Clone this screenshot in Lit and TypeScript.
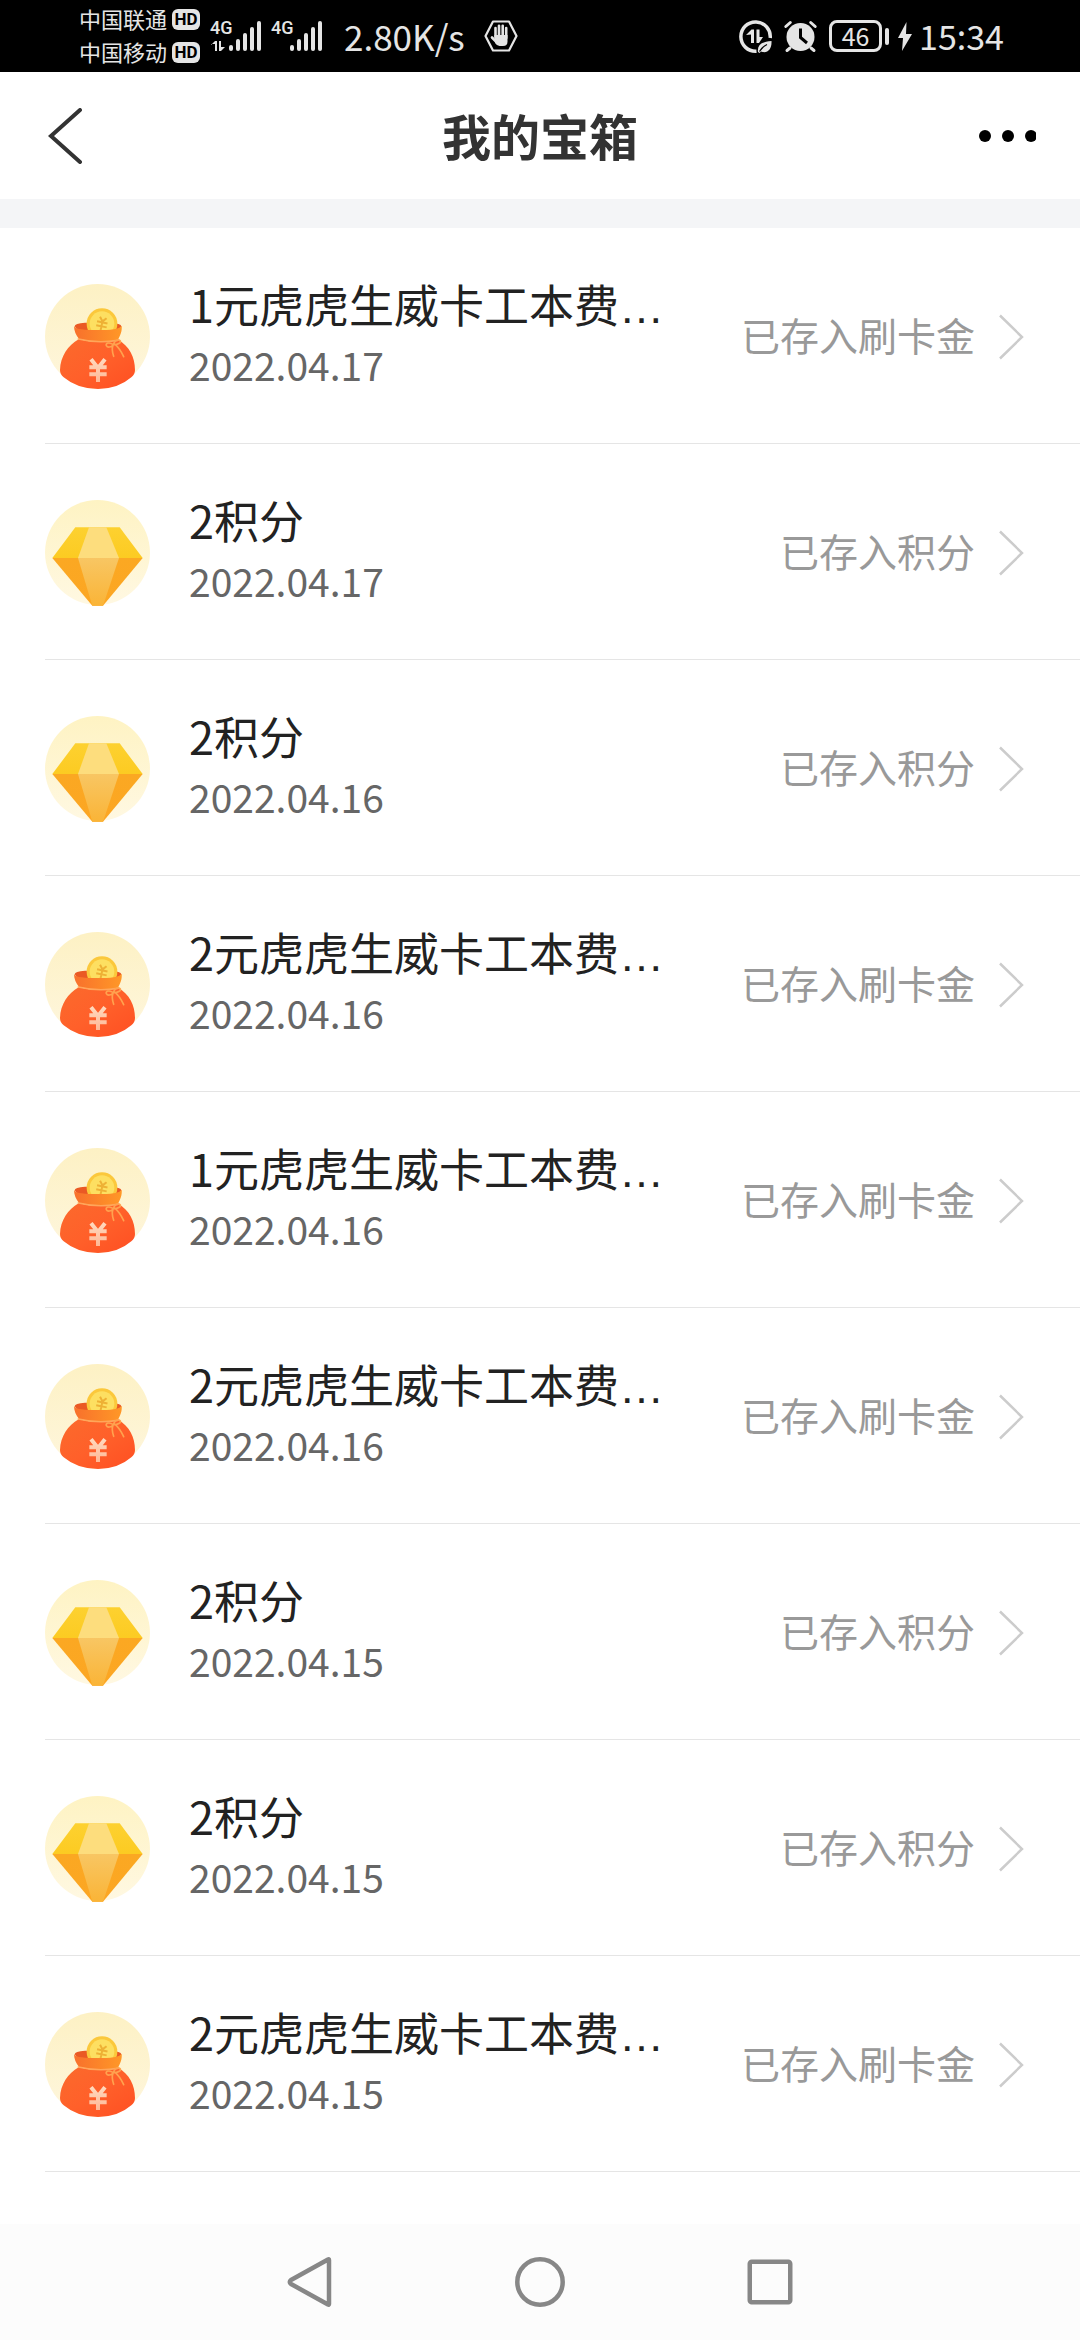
import { LitElement, html, css, svg } from "lit";
import { customElement, property } from "lit/decorators.js";

type Kind = "bag" | "gem";

interface Prize {
  kind: Kind;
  title: string;
  truncated: boolean;
  date: string;
}

const card = (yuan: number, date: string): Prize => ({
  kind: "bag",
  title: `${yuan}元虎虎生威卡工本费`,
  truncated: true,
  date,
});

const points = (count: number, date: string): Prize => ({
  kind: "gem",
  title: `${count}积分`,
  truncated: false,
  date,
});

const PRIZES: Prize[] = [
  card(1, "2022.04.17"),
  points(2, "2022.04.17"),
  points(2, "2022.04.16"),
  card(2, "2022.04.16"),
  card(1, "2022.04.16"),
  card(2, "2022.04.16"),
  points(2, "2022.04.15"),
  points(2, "2022.04.15"),
  card(2, "2022.04.15"),
];

const DESTINATION: Record<Kind, string> = {
  bag: "已存入刷卡金",
  gem: "已存入积分",
};

const bars = svg`
  <g fill="currentColor">
    <rect x="18" y="25" width="4" height="6" rx="2" />
    <rect x="25" y="19" width="4" height="12" rx="2" />
    <rect x="32" y="13" width="4" height="18" rx="2" />
    <rect x="39" y="7" width="4" height="24" rx="2" />
    <rect x="46" y="1" width="4" height="30" rx="2" />
  </g>`;

@customElement("status-bar")
export class StatusBar extends LitElement {
  static styles = css`
    :host {
      display: flex;
      align-items: center;
      justify-content: space-between;
      height: 72px;
      padding: 0 76px 0 79px;
      background: #000;
      color: #e5e5e5;
      font-family: "Noto Sans CJK SC", sans-serif;
    }
    svg {
      display: block;
      flex: none;
      overflow: visible;
    }
    .side {
      display: flex;
      align-items: center;
    }
    .carriers {
      display: flex;
      flex-direction: column;
      gap: 1px;
      margin-right: 11px;
      padding-bottom: 3px;
    }
    .carrier {
      display: flex;
      align-items: center;
      gap: 5px;
      font-size: 22px;
      line-height: 32px;
    }
    .hd {
      width: 28px;
      height: 21px;
      margin-top: 3px;
      border-radius: 6px;
      background: #e5e5e5;
      color: #000;
      font: 700 17px/21px Roboto, sans-serif;
      text-align: center;
    }
    .signals {
      display: flex;
      gap: 10px;
      margin-right: 21px;
    }
    .net {
      font: 500 18px Roboto, sans-serif;
    }
    .big {
      font-size: 35px;
      line-height: 72px;
    }
    .speed {
      margin-right: 19px;
    }
    .right {
      gap: 12px;
    }
    .battery {
      display: flex;
      align-items: center;
      gap: 3px;
      margin-right: -3px;
    }
    .cell {
      box-sizing: border-box;
      width: 53px;
      height: 32px;
      border: 3px solid #e5e5e5;
      border-radius: 8px;
      font-size: 25px;
      line-height: 25px;
      text-align: center;
    }
    .nub {
      width: 4px;
      height: 17px;
      border-radius: 2px;
      background: #e5e5e5;
    }
    .time {
      margin-left: -5px;
      font-size: 34px;
    }
  `;

  render() {
    return html`
      <div class="side">
        <div class="carriers">
          <div class="carrier">中国联通<span class="hd">HD</span></div>
          <div class="carrier">中国移动<span class="hd">HD</span></div>
        </div>
        <div class="signals">
          <svg width="51" height="32" viewBox="0 0 51 32">
            <text class="net" x="-1" y="14" fill="currentColor">4G</text>
            <path d="M0 25l4-4h2v10H4v-7H0zM8 21h2v6h4l-4 4H8z" fill="currentColor" />
            ${bars}
          </svg>
          <svg width="51" height="32" viewBox="0 0 51 32">
            <text class="net" x="-1" y="14" fill="currentColor">4G</text>
            ${bars}
          </svg>
        </div>
        <span class="big speed">2.80K/s</span>
        <svg width="34" height="32" viewBox="0 0 34 32">
          <path d="M9 1.5h16L32.5 16 25 30.5H9L1.5 16z" fill="none" stroke="currentColor" stroke-width="2.2" stroke-linejoin="round" />
          <path d="M11.5 8v9M15 5.8v11M18.7 5.8v11M22.2 8v10M8 17.5l5 5" stroke="currentColor" stroke-width="2.6" stroke-linecap="round" />
          <path d="M10.3 15h13.2v6.5q0 4.5-4.5 4.5h-3.5q-2.5 0-4.5-3z" fill="currentColor" />
        </svg>
      </div>
      <div class="side right">
        <svg width="33" height="33" viewBox="0 0 33 33">
          <path d="M31.2 18A14.7 14.7 0 1 0 17.5 31.3" fill="none" stroke="currentColor" stroke-width="3.5" />
          <path d="M7 15l5.5-5.5H15V23h-3v-8.5zM17.5 9.5h3V17H24l-4 6h-2.5z" fill="currentColor" />
          <path d="M19 32c-1-7 4-10.5 13.5-11 .5 8-4 13-10.5 10.5l-1.5 1.5z" fill="currentColor" />
          <path d="M20.5 31.5q3-5 7.5-7" fill="none" stroke="#000" stroke-width="1.3" />
        </svg>
        <svg width="33" height="31" viewBox="0 0 33 31">
          <circle cx="16.5" cy="16" r="14" fill="currentColor" />
          <path d="M1.8 5.5l4.5-4M31.2 5.5l-4.5-4M6 27l-3 2.5M27 27l3 2.5" stroke="currentColor" stroke-width="3" stroke-linecap="round" />
          <path d="M16.5 7.5v9l6.5 5.5" fill="none" stroke="#000" stroke-width="3" />
        </svg>
        <div class="battery">
          <div class="cell">46</div>
          <div class="nub"></div>
        </div>
        <svg width="14" height="29" viewBox="0 0 14 29">
          <path d="M8.5 0L0 16h5l-1 13 10-17H8z" fill="currentColor" />
        </svg>
        <span class="big time">15:34</span>
      </div>
    `;
  }
}

@customElement("prize-icon")
export class PrizeIcon extends LitElement {
  @property() kind: Kind = "bag";

  static styles = css`
    :host {
      display: block;
      flex: none;
      width: 105px;
      height: 105px;
    }
    svg {
      display: block;
      width: 100%;
      height: 100%;
      overflow: visible;
    }
  `;

  private bag() {
    return html`
      <svg viewBox="45 42 315 315" aria-hidden="true">
        <defs>
          <linearGradient id="disc" x1="0" y1="0" x2="0" y2="1">
            <stop offset="0" stop-color="#fdf1c4" />
            <stop offset="1" stop-color="#fef6dd" />
          </linearGradient>
          <linearGradient id="body" x1="0" y1="0" x2="1" y2="1">
            <stop offset="0" stop-color="#fb6a2c" />
            <stop offset="0.5" stop-color="#ff602a" />
            <stop offset="1" stop-color="#ff4f22" />
          </linearGradient>
          <linearGradient id="rim" x1="0" y1="0" x2="1" y2="0">
            <stop offset="0" stop-color="#f8702c" />
            <stop offset="1" stop-color="#ff9827" />
          </linearGradient>
          <linearGradient id="yuan" x1="0" y1="0" x2="0" y2="1">
            <stop offset="0" stop-color="#ffd9bd" />
            <stop offset="1" stop-color="#ffb795" />
          </linearGradient>
        </defs>
        <circle cx="202.5" cy="199.5" r="157.5" fill="url(#disc)" />
        <path d="M134 169Q134 160 165 158H240Q274 160 274 169L262 184H146Z" fill="#ea5924" />
        <circle cx="216" cy="161" r="46" fill="#fbc83c" />
        <circle cx="216" cy="161" r="37" fill="#fddf61" />
        <g transform="rotate(12 216 161)" fill="none" stroke="#eeb135" stroke-width="6">
          <path d="M206 142l10 12 10-12M216 153v31M200 157h32M200 169h32" />
        </g>
        <path d="M146 208Q202 222 265 210C298 228 315 262 315 300Q315 313 304 322Q264 357 204 357Q142 357 101 322Q90 313 90 300C91 260 114 226 146 208Z" fill="url(#body)" />
        <path d="M132 168C138 179 164 180 203 180C242 180 268 178 275 167C277 184 270 198 263 211Q204 221 147 207C138 196 132 183 132 168Z" fill="url(#rim)" />
        <path d="M145 207Q202 221 263 211" fill="none" stroke="#ffa65a" stroke-width="5" stroke-linecap="round" />
        <path d="M250 224C236 214 226 221 229 227S243 233 250 224C254 209 265 207 270 212S266 224 250 224M249 226Q244 240 251 259M256 224Q270 236 281 260" fill="none" stroke="#ffa24f" stroke-width="5" stroke-linecap="round" />
        <path d="M183 268l21 26 21-26M204 292v44M178 292h52M178 313h52" fill="none" stroke="url(#yuan)" stroke-width="12" />
      </svg>
    `;
  }

  private gem() {
    return html`
      <svg viewBox="45 45 315 315" aria-hidden="true">
        <defs>
          <linearGradient id="disc" x1="0" y1="0" x2="0" y2="1">
            <stop offset="0" stop-color="#fef3c3" />
            <stop offset="1" stop-color="#fff8e2" />
          </linearGradient>
          <linearGradient id="top" x1="0" y1="0" x2="0" y2="1">
            <stop offset="0" stop-color="#fdd130" />
            <stop offset="1" stop-color="#fccb22" />
          </linearGradient>
          <linearGradient id="low" x1="0" y1="0" x2="0" y2="1">
            <stop offset="0" stop-color="#fba822" />
            <stop offset="1" stop-color="#fca623" />
          </linearGradient>
          <linearGradient id="mid" x1="0" y1="0" x2="0" y2="1">
            <stop offset="0" stop-color="#f8c663" />
            <stop offset="1" stop-color="#fab437" />
          </linearGradient>
        </defs>
        <circle cx="202.5" cy="202.5" r="157.5" fill="url(#disc)" />
        <path d="M136 127H269L338 219H67Z" fill="url(#top)" />
        <path d="M67 219H338L219 362H187Z" fill="url(#low)" />
        <path d="M177 127H229L267 219H144Z" fill="#fddd7d" />
        <path d="M144 219H267L219 362H187Z" fill="url(#mid)" />
      </svg>
    `;
  }

  render() {
    return this.kind === "bag" ? this.bag() : this.gem();
  }
}

@customElement("prize-row")
export class PrizeRow extends LitElement {
  @property({ attribute: false }) prize!: Prize;

  static styles = css`
    :host {
      display: block;
    }
    .row {
      box-sizing: border-box;
      display: flex;
      align-items: center;
      height: 216px;
      margin-left: 45px;
      padding: 2px 56px 0 0;
      border-bottom: 1px solid #e5e5e5;
      color: #222;
      text-decoration: none;
    }
    .info {
      flex: 1;
      min-width: 0;
      margin-left: 39px;
      padding-bottom: 5px;
      line-height: 61px;
      white-space: nowrap;
    }
    .title {
      font-size: 45px;
    }
    .more {
      font-family: "Liberation Sans", sans-serif;
      line-height: 1;
    }
    .date {
      display: block;
      font-size: 39px;
      color: #666;
    }
    .state {
      margin-right: 24px;
      padding-bottom: 5px;
      font-size: 39px;
      line-height: 61px;
      color: #999;
      white-space: nowrap;
    }
    .arrow {
      flex: none;
    }
  `;

  render() {
    const { kind, title, truncated, date } = this.prize;
    return html`
      <a class="row" href="#">
        <prize-icon .kind=${kind}></prize-icon>
        <div class="info">
          <div class="title">${title}${truncated ? html`<span class="more">…</span>` : ""}</div>
          <time class="date">${date}</time>
        </div>
        <span class="state">${DESTINATION[kind]}</span>
        <svg class="arrow" width="25" height="46" viewBox="0 0 25 46" aria-hidden="true">
          <path d="M1 1.5L23 23 1 44.5" fill="none" stroke="#ccc" stroke-width="2.5" />
        </svg>
      </a>
    `;
  }
}

@customElement("app-root")
export class AppRoot extends LitElement {
  static styles = css`
    :host {
      display: flex;
      flex-direction: column;
      min-height: 100vh;
      background: #fff;
      font-family: "Noto Sans CJK SC", sans-serif;
    }
    button {
      display: flex;
      align-items: center;
      justify-content: center;
      margin: 0;
      padding: 0;
      border: 0;
      background: none;
    }
    .header {
      display: grid;
      grid-template-columns: 1fr auto 1fr;
      align-items: center;
      height: 127px;
      padding: 0 44px;
      border-bottom: 29px solid #f4f5f7;
    }
    .heading {
      margin: 0;
      padding-bottom: 2px;
      font-size: 49px;
      font-weight: 700;
      line-height: 72px;
      color: #333;
    }
    .back {
      justify-self: start;
    }
    .menu {
      justify-self: end;
    }
    .list {
      margin: 0;
      padding: 0;
      list-style: none;
    }
    .nav {
      display: grid;
      grid-template-columns: repeat(3, 1fr);
      height: 116px;
      margin-top: auto;
      padding: 0 18%;
      background: #fcfcfc;
    }
  `;

  render() {
    return html`
      <status-bar></status-bar>
      <header class="header">
        <button class="back" aria-label="返回">
          <svg width="40" height="56" viewBox="0 0 40 56">
            <path d="M36 2L7 28l29 26" fill="none" stroke="#333" stroke-width="4" stroke-linecap="round" />
          </svg>
        </button>
        <h1 class="heading">我的宝箱</h1>
        <button class="menu" aria-label="更多">
          <svg width="58" height="14" viewBox="0 0 58 14">
            <circle cx="7" cy="7" r="6" />
            <circle cx="30" cy="7" r="6" />
            <circle cx="53" cy="7" r="6" />
          </svg>
        </button>
      </header>
      <ul class="list">
        ${PRIZES.map((prize) => html`<li><prize-row .prize=${prize}></prize-row></li>`)}
      </ul>
      <nav class="nav">
        <button aria-label="后退">
          <svg width="46" height="52" viewBox="0 0 46 52">
            <path d="M42 4V48Q42 49 41 48.5L4 28Q1.5 26 4 24L41 3.5Q42 3 42 4Z" fill="none" stroke="#878787" stroke-width="4.5" stroke-linejoin="round" />
          </svg>
        </button>
        <button aria-label="主屏幕">
          <svg width="52" height="52" viewBox="0 0 52 52">
            <circle cx="26" cy="26" r="22.7" fill="none" stroke="#878787" stroke-width="4.5" />
          </svg>
        </button>
        <button aria-label="最近任务">
          <svg width="46" height="46" viewBox="0 0 46 46">
            <rect x="2.75" y="2.75" width="40.5" height="40.5" rx="2" fill="none" stroke="#878787" stroke-width="4.5" />
          </svg>
        </button>
      </nav>
    `;
  }
}
